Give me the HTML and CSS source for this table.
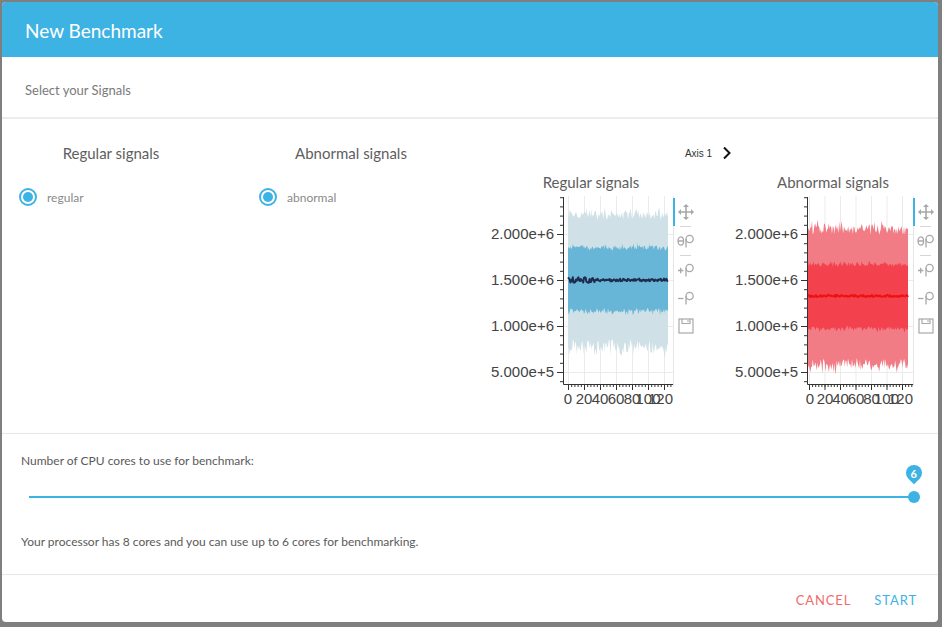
FILE: index.html
```html
<!DOCTYPE html>
<html lang="en">
<head>
<meta charset="utf-8">
<title>New Benchmark</title>
<link rel="stylesheet" href="styles.css">
</head>
<body>
<div class="dialog">
  <header class="dlg-header"><h1 class="dlg-title">New Benchmark</h1></header>
  <div class="dlg-sub">Select your Signals</div>

  <section class="signals">
    <div class="sig-col">
      <h2 class="sig-head">Regular signals</h2>
      <label class="radio"><span class="radio-ring"><span class="radio-dot"></span></span><span class="radio-label">regular</span></label>
    </div>
    <div class="sig-col">
      <h2 class="sig-head">Abnormal signals</h2>
      <label class="radio"><span class="radio-ring"><span class="radio-dot"></span></span><span class="radio-label">abnormal</span></label>
    </div>

    <div class="charts">
      <div class="axis-tab">
        <span>Axis 1</span>
        <svg class="chev" width="10" height="14" viewBox="0 0 10 14"><path d="M2 1.5l5.5 5.5L2 12.5" fill="none" stroke="#111" stroke-width="2"/></svg>
      </div>
      <div class="chart-row">
        <div class="chart">
          <div class="chart-title">Regular signals</div>
          <div class="chart-body">
            <svg class="plot" width="186" height="212" viewBox="0 0 186 212">
              <path class="grid" id="grid1"/>
              <path class="outer-reg" id="outer1"/>
              <path class="inner-reg" id="inner1"/>
              <path class="line-reg" id="line1"/>
              <path class="axis" d="M76.5 1V188.5H186"/>
              <path class="axis" id="ticks1"/>
              <g class="ylab">
                <text x="67" y="43">2.000e+6</text>
                <text x="67" y="89">1.500e+6</text>
                <text x="67" y="135">1.000e+6</text>
                <text x="67" y="181">5.000e+5</text>
              </g>
              <g class="xlab">
                <text x="81" y="208">0</text>
                <text x="97" y="208">20</text>
                <text x="113" y="208">40</text>
                <text x="129" y="208">60</text>
                <text x="145" y="208">80</text>
                <text x="161" y="208">100</text>
                <text class="xlast" x="186" y="208">120</text>
              </g>
            </svg>
            <div class="toolbar">
              <div class="tool active"><svg width="16" height="16" viewBox="0 0 16 16"><path d="M8 2.5v11M2.5 8h11" stroke="currentColor" stroke-width="1.6"/><path d="M8 0l3 3H5zM8 16l3-3H5zM0 8l3-3v6zM16 8l-3-3v6z" fill="currentColor"/></svg></div>
              <div class="tool-sep"></div>
              <div class="tool"><svg width="18" height="14" viewBox="0 0 18 14" fill="none" stroke="currentColor" stroke-width="1.3"><ellipse cx="3.8" cy="7" rx="2.8" ry="4.2"/><path d="M1 7h5.6"/><circle cx="12.6" cy="5" r="3.6"/><path d="M9 5v8.5"/></svg></div>
              <div class="tool-sep"></div>
              <div class="tool"><svg width="18" height="14" viewBox="0 0 18 14" fill="none" stroke="currentColor" stroke-width="1.3"><path d="M1 7.5h5.4M3.7 4.8v5.4"/><circle cx="12.6" cy="5" r="3.6"/><path d="M9 5v8.5"/></svg></div>
              <div class="tool"><svg width="18" height="14" viewBox="0 0 18 14" fill="none" stroke="currentColor" stroke-width="1.3"><path d="M1 7.5h5.4"/><circle cx="12.6" cy="5" r="3.6"/><path d="M9 5v8.5"/></svg></div>
              <div class="tool"><svg width="16" height="16" viewBox="0 0 16 16" fill="none" stroke="currentColor" stroke-width="1.2"><rect x="1" y="1" width="14" height="14"/><path d="M4 1v4.5h8V1M10 2.3v1.8"/></svg></div>
            </div>
          </div>
        </div>

        <div class="chart">
          <div class="chart-title">Abnormal signals</div>
          <div class="chart-body">
            <svg class="plot" width="182" height="212" viewBox="0 0 182 212">
              <path class="grid" id="grid2"/>
              <path class="outer-abn" id="outer2"/>
              <path class="inner-abn" id="inner2"/>
              <path class="line-abn" id="line2"/>
              <path class="axis" d="M76.5 1V188.5H182"/>
              <path class="axis" id="ticks2"/>
              <g class="ylab">
                <text x="67" y="43">2.000e+6</text>
                <text x="67" y="89">1.500e+6</text>
                <text x="67" y="135">1.000e+6</text>
                <text x="67" y="181">5.000e+5</text>
              </g>
              <g class="xlab">
                <text x="79" y="208">0</text>
                <text x="94" y="208">20</text>
                <text x="109.5" y="208">40</text>
                <text x="125" y="208">60</text>
                <text x="140.5" y="208">80</text>
                <text x="155.5" y="208">100</text>
                <text class="xlast" x="182" y="208">120</text>
              </g>
            </svg>
            <div class="toolbar">
              <div class="tool active"><svg width="16" height="16" viewBox="0 0 16 16"><path d="M8 2.5v11M2.5 8h11" stroke="currentColor" stroke-width="1.6"/><path d="M8 0l3 3H5zM8 16l3-3H5zM0 8l3-3v6zM16 8l-3-3v6z" fill="currentColor"/></svg></div>
              <div class="tool-sep"></div>
              <div class="tool"><svg width="18" height="14" viewBox="0 0 18 14" fill="none" stroke="currentColor" stroke-width="1.3"><ellipse cx="3.8" cy="7" rx="2.8" ry="4.2"/><path d="M1 7h5.6"/><circle cx="12.6" cy="5" r="3.6"/><path d="M9 5v8.5"/></svg></div>
              <div class="tool-sep"></div>
              <div class="tool"><svg width="18" height="14" viewBox="0 0 18 14" fill="none" stroke="currentColor" stroke-width="1.3"><path d="M1 7.5h5.4M3.7 4.8v5.4"/><circle cx="12.6" cy="5" r="3.6"/><path d="M9 5v8.5"/></svg></div>
              <div class="tool"><svg width="18" height="14" viewBox="0 0 18 14" fill="none" stroke="currentColor" stroke-width="1.3"><path d="M1 7.5h5.4"/><circle cx="12.6" cy="5" r="3.6"/><path d="M9 5v8.5"/></svg></div>
              <div class="tool"><svg width="16" height="16" viewBox="0 0 16 16" fill="none" stroke="currentColor" stroke-width="1.2"><rect x="1" y="1" width="14" height="14"/><path d="M4 1v4.5h8V1M10 2.3v1.8"/></svg></div>
            </div>
          </div>
        </div>
      </div>
    </div>
  </section>

  <section class="cores">
    <div class="cores-label">Number of CPU cores to use for benchmark:</div>
    <div class="slider">
      <div class="track"></div>
      <div class="thumb"><span class="bubble"><span class="bubble-num">6</span></span></div>
    </div>
    <div class="cores-note">Your processor has 8 cores and you can use up to 6 cores for benchmarking.</div>
  </section>

  <footer class="dlg-footer">
    <button class="btn btn-cancel">CANCEL</button>
    <button class="btn btn-start">START</button>
  </footer>
</div>
<script src="script.js"></script>
</body>
</html>
```

FILE: styles.css
```css
* { box-sizing: border-box; }
html, body { margin: 0; height: 100%; }
body {
  background: #7f7f7f;
  padding: 2px 0 0 2px;
  overflow: hidden;
  font-family: Lato, "Open Sans", sans-serif;
}
.dialog {
  width: 936px;
  height: 620px;
  background: #fff;
  border-radius: 4px;
  overflow: hidden;
  display: flex;
  flex-direction: column;
}
.dlg-header {
  height: 55px;
  flex: none;
  background: #3db3e4;
  display: flex;
  align-items: center;
  padding: 2px 0 0 23px;
}
.dlg-title {
  margin: 0;
  font-size: 19px;
  font-weight: 400;
  color: #fff;
}
.dlg-sub {
  height: 62px;
  flex: none;
  border-bottom: 2px solid #ececec;
  padding: 25px 0 0 23px;
  font-size: 13px;
  line-height: 16px;
  color: #7a7a7a;
}
.signals {
  height: 315px;
  flex: none;
  border-bottom: 1px solid #e6e6e6;
  display: flex;
  padding: 24px 0 0 18px;
}
.sig-col { width: 182px; flex: none; }
.sig-col + .sig-col { margin-left: 58px; }
.sig-head {
  margin: 0;
  font-size: 15px;
  font-weight: 400;
  line-height: 20px;
  color: #5e5e5e;
  text-align: center;
}
.radio {
  display: flex;
  align-items: center;
  height: 18px;
  margin-top: 25px;
  margin-left: -1px;
}
.radio-ring {
  width: 18px;
  height: 18px;
  border: 2px solid #3cb3e4;
  border-radius: 50%;
  display: flex;
  align-items: center;
  justify-content: center;
}
.radio-dot {
  width: 10px;
  height: 10px;
  border-radius: 50%;
  background: #3cb3e4;
}
.radio-label {
  margin-left: 10px;
  font-size: 12px;
  color: #8a8a8a;
}
.charts {
  margin-left: 45px;
  display: flex;
  flex-direction: column;
}
.axis-tab {
  height: 20px;
  display: flex;
  align-items: center;
  justify-content: center;
  gap: 10px;
  padding-right: 8px;
  font-family: "Liberation Sans", Arial, sans-serif;
  font-size: 10px;
  color: #333;
}
.chev { display: block; }
.chart-row {
  display: flex;
  gap: 33px;
  margin-top: 9px;
}
.chart { display: flex; flex-direction: column; }
.chart-title {
  font-size: 15px;
  line-height: 20px;
  color: #5e5e5e;
  text-align: center;
  padding-right: 3px;
}
.chart-body {
  display: flex;
  margin-top: 4px;
}
.plot { display: block; }
.plot text {
  font-family: "Liberation Sans", Arial, sans-serif;
  font-size: 15px;
  fill: #444;
}
.ylab text { text-anchor: end; }
.xlab text { text-anchor: middle; }
.xlab .xlast { text-anchor: end; }
.grid { fill: none; stroke: #ebebeb; stroke-width: 1; }
.axis { fill: none; stroke: #333; stroke-width: 1; }
.outer-reg { fill: #cfe1e6; }
.inner-reg { fill: #67b6d7; }
.line-reg { fill: none; stroke: #1f2b4c; stroke-width: 2; stroke-linejoin: round; }
.outer-abn { fill: #f17c85; }
.inner-abn { fill: #f3414e; }
.line-abn { fill: none; stroke: #ee1111; stroke-width: 2; stroke-linejoin: round; }

.toolbar {
  width: 25px;
  height: 190px;
  border-left: 1px solid #e6e6e6;
  padding-top: 2px;
  display: flex;
  flex-direction: column;
  color: #a8a8a8;
}
.tool {
  height: 28px;
  display: flex;
  align-items: center;
  justify-content: center;
  flex: none;
}
.tool.active {
  border-left: 2px solid #3cb3e4;
  margin-left: -1px;
  padding-right: 1px;
}
.tool svg { display: block; }
.tool-sep {
  height: 1px;
  flex: none;
  background: #d6d6d6;
  margin: 0 7px 0 6px;
}

.cores {
  height: 141px;
  flex: none;
  border-bottom: 1px solid #e6e6e6;
  padding: 19px 0 0 19px;
}
.cores-label, .cores-note {
  font-size: 12px;
  line-height: 16px;
  color: #5a5a5a;
}
.slider {
  position: relative;
  width: 885px;
  height: 20px;
  margin: 18px 0 0 8px;
  display: flex;
  align-items: center;
}
.track {
  flex: 1;
  height: 2px;
  background: #3cb3e4;
}
.thumb {
  position: absolute;
  right: -6px;
  top: 4px;
  width: 12px;
  height: 12px;
  border-radius: 50%;
  background: #3cb3e4;
}
.bubble {
  position: absolute;
  left: -2px;
  top: -26px;
  width: 16px;
  height: 16px;
  background: #3cb3e4;
  border-radius: 50% 50% 0 50%;
  transform: rotate(45deg);
  display: flex;
  align-items: center;
  justify-content: center;
}
.bubble-num {
  transform: rotate(-45deg);
  color: #fff;
  font-size: 11px;
  font-weight: 700;
  line-height: 1;
}
.cores-note { margin-top: 27px; }

.dlg-footer {
  flex: 1;
  display: flex;
  justify-content: flex-end;
  align-items: center;
  gap: 23px;
  padding: 3px 21px 0 0;
}
.btn {
  background: none;
  border: 0;
  padding: 0;
  font-family: Lato, "Open Sans", sans-serif;
  font-size: 13px;
  letter-spacing: 0.9px;
  cursor: pointer;
}
.btn-cancel { color: #ef6c6c; }
.btn-start { color: #3db3e4; }
```

FILE: script.js
```js
(function () {
  function rng(a) {
    return function () {
      a |= 0; a = a + 0x6D2B79F5 | 0;
      var t = Math.imul(a ^ a >>> 15, 1 | a);
      t = t + Math.imul(t ^ t >>> 7, 61 | t) ^ t;
      return ((t ^ t >>> 14) >>> 0) / 4294967296;
    };
  }
  function f(n) { return n.toFixed(1); }
  function band(r, x0, x1, tb, ta, bb, ba) {
    var top = [], bot = [], x;
    for (x = x0; x <= x1 + 0.01; x += 0.8) {
      var s1 = r(), s2 = r();
      top.push(f(x) + ' ' + f(tb - ta * (0.55 * r() + 0.45 * s1 * s1 * s1)));
      bot.push(f(x) + ' ' + f(bb + ba * (0.55 * r() + 0.45 * s2 * s2 * s2)));
    }
    bot.reverse();
    return 'M' + top.join('L') + 'L' + bot.join('L') + 'Z';
  }
  function sig(r, x0, x1, y, amp, startAmp) {
    var pts = [], x;
    for (x = x0; x <= x1 + 0.01; x += 0.8) {
      var a = x < x0 + 30 ? startAmp : amp;
      pts.push(f(x) + ' ' + f(y + (r() - 0.5) * 2 * a));
    }
    return 'M' + pts.join('L');
  }
  function grid(ym, xm, w) {
    var d = '';
    ym.forEach(function (y) { d += 'M77 ' + (y + 0.5) + 'H' + w; });
    xm.forEach(function (x) { d += 'M' + f(x + 0.5) + ' 0V188'; });
    return d;
  }
  function ticks(ym, xm, step, x0, x1) {
    var d = '', y, x;
    ym.forEach(function (v) { d += 'M70 ' + (v + 0.5) + 'h6'; });
    for (y = 1.2; y < 188; y += 9.2) d += 'M73 ' + f(y + 0.5) + 'h3';
    xm.forEach(function (v) { d += 'M' + f(v + 0.5) + ' 188v6'; });
    for (x = x0; x <= x1 + 0.01; x += step) d += 'M' + f(x + 0.5) + ' 188v3';
    return d;
  }
  function set(id, d) { var el = document.getElementById(id); if (el) el.setAttribute('d', d); }

  var ym = [38, 84, 130, 176];
  var xm1 = [81, 97, 113, 129, 145, 161, 177];
  var xm2 = [78, 93.5, 109, 124.5, 140, 155.5, 171];

  var r1 = rng(12345);
  set('grid1', grid(ym, xm1, 186));
  set('outer1', band(r1, 81, 181, 24, 14, 143, 20));
  set('inner1', band(r1, 81, 181, 55, 9, 112, 8));
  set('line1', sig(r1, 81, 181, 84, 1.4, 2.8));
  set('ticks1', ticks(ym, xm1, 3.2, 81, 185));

  var r2 = rng(987);
  set('grid2', grid(ym, xm2, 182));
  set('outer2', band(r2, 77, 177, 39, 16, 162, 19));
  set('inner2', band(r2, 77, 177, 71, 7, 130, 7));
  set('line2', sig(r2, 77, 177, 100, 1.0, 1.3));
  set('ticks2', ticks(ym, xm2, 3.1, 78, 181));
})();
```
